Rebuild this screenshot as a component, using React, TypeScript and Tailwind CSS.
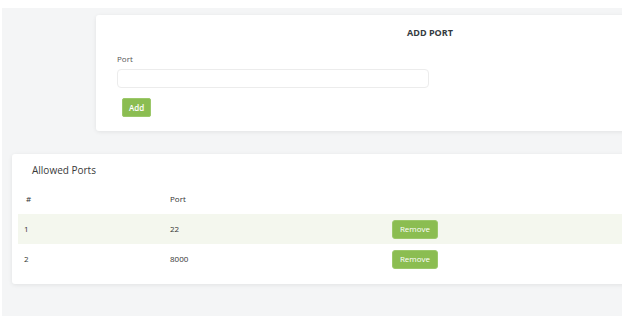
import React from "react";

const font = { fontFamily: '"Open Sans", "Liberation Sans", sans-serif' };

function RemoveBtn() {
  return (
    <button className="h-[19px] w-[46px] rounded-[3px] bg-[#8bbd51] text-[8px] leading-none text-white border border-[#9cc86a]">
      Remove
    </button>
  );
}

export default function App() {
  const rows = [
    { n: "1", port: "22", bg: "bg-[#f4f7ee]" },
    { n: "2", port: "8000", bg: "bg-white" },
  ];
  return (
    <div className="w-[643px] h-[316px] bg-white overflow-hidden" style={font}>
      <div className="ml-[2px] mt-[8px] w-[620px] h-[308px] overflow-hidden bg-[#f4f5f6] flex flex-col">
        {/* Add port card */}
        <div className="ml-[94px] mt-[7px] w-[668px] h-[116px] shrink-0 bg-white rounded-[3px] shadow-[0_1px_4px_rgba(0,0,0,0.08)] flex flex-col">
          <div className="pt-[13px] text-center text-[9px] leading-[10px] font-bold text-[#343a40]">ADD PORT</div>
          <div className="ml-[21px] mt-[16px] text-[8px] leading-[10px] text-[#555]">Port</div>
          <div className="ml-[21px] mt-[5px] w-[312px] h-[19px] rounded-[4px] border border-[#ececec] bg-white" />
          <button className="ml-[26px] mt-[10px] w-[29px] h-[19px] rounded-[2px] bg-[#8bbd51] border border-[#9cc86a] text-[8px] leading-none text-white font-semibold">
            Add
          </button>
        </div>

        {/* Allowed ports card */}
        <div className="ml-[10px] mt-[23px] w-[640px] h-[130px] shrink-0 bg-white rounded-[3px] shadow-[0_1px_4px_rgba(0,0,0,0.08)] flex flex-col">
          <div className="ml-[20px] mt-[10px] text-[10px] leading-[12px] text-[#3a3a3a]">Allowed Ports</div>
          <div className="ml-[6px] mt-[8px] flex flex-col">
            <div className="flex h-[30px] items-center text-[8px] text-[#333] font-medium">
              <div className="w-[144px] pl-[8px]">#</div>
              <div className="w-[222px] pl-[8px]">Port</div>
              <div className="flex-1" />
            </div>
            {rows.map((r) => (
              <div key={r.n} className={`flex h-[30px] items-center text-[8px] text-[#333] ${r.bg}`}>
                <div className="w-[144px] pl-[6px]">{r.n}</div>
                <div className="w-[222px] pl-[8px]">{r.port}</div>
                <div className="flex-1 pl-[8px]">
                  <RemoveBtn />
                </div>
              </div>
            ))}
          </div>
        </div>
      </div>
    </div>
  );
}
